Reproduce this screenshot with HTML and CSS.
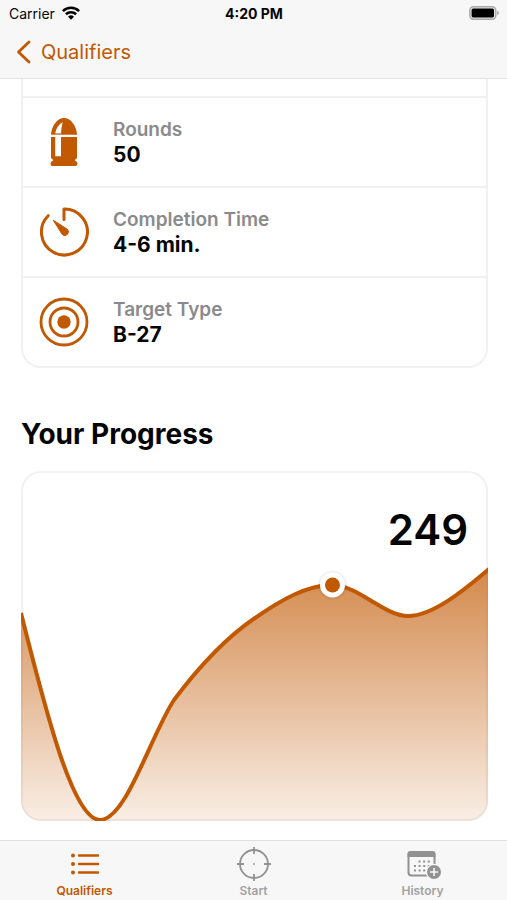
FILE: index.html
```
<!DOCTYPE html>
<html lang="en">
<head>
<meta charset="utf-8">
<meta name="viewport" content="width=device-width, initial-scale=1">
<title>Qualifiers</title>
<link rel="stylesheet" href="styles.css">
</head>
<body>
<div class="app">
  <header class="top">
    <div class="status">
      <div class="carrier">
        <span>Carrier</span>
        <svg class="wifi" viewBox="0 0 18 14" aria-hidden="true">
          <g fill="none" stroke="currentColor" stroke-width="2.6">
            <path d="M.9 5.1A11.6 11.6 0 0 1 17.1 5.1"/>
            <path d="M3.9 8.3A7.3 7.3 0 0 1 14.1 8.3"/>
          </g>
          <path fill="currentColor" d="M9 13.8 6 10.7A4.3 4.3 0 0 1 12 10.7Z"/>
        </svg>
      </div>
      <time class="clock">4:20 PM</time>
      <svg class="battery" viewBox="0 0 30 14" aria-hidden="true">
        <rect x=".8" y=".8" width="26" height="12.4" rx="3.6" fill="#e4e4e4" stroke="#aaa" stroke-width="1.4"/>
        <rect x="2.6" y="2.6" width="22.4" height="8.8" rx="1.6" fill="#000"/>
        <path d="M28.2 4.7Q30 5.4 30 7T28.2 9.3Z" fill="#aaa"/>
      </svg>
    </div>
    <nav>
      <a class="back" href="#qualifiers">
        <svg class="chevron" viewBox="0 0 15 24" aria-hidden="true"><path d="M13 2 2.5 12 13 22" fill="none" stroke="currentColor" stroke-width="2.8" stroke-linecap="round" stroke-linejoin="round"/></svg>
        <span>Qualifiers</span>
      </a>
    </nav>
  </header>

  <main class="content">
    <div class="details">
      <div class="row">
        <svg class="row-icon" viewBox="0 0 50 50" aria-hidden="true">
          <g fill="currentColor">
            <path d="M12 17.6C12.600 8.500 18.500 1 25 1S37.400 8.500 38 17.600Z"/>
            <path d="M12 19.800H38V40.500Q38 41.500 36.800 42Q35 42.800 36.500 44Q38.500 44.600 38.500 46.500T37 49H13Q11.500 48.500 11.500 46.500T13.500 44Q15 42.800 13.200 42Q12 41.500 12 40.500Z"/>
          </g>
          <path d="M16.200 17.600C16.700 12 19.300 7.500 23.700 5.300Q22 11 22 17.600V39.300H16.200Z" fill="#fff"/>
          <path d="M12 18.700H38" stroke="#fff" stroke-width="2.200"/>
          <path d="M12 17H38" stroke="currentColor" stroke-width="1.200"/>
        </svg>
        <dl class="fact"><dt>Rounds</dt><dd>50</dd></dl>
      </div>
      <div class="row">
        <svg class="row-icon" viewBox="0 0 50 50" aria-hidden="true">
          <path d="M25 12.500V2A23 23 0 1 1 9.200 8.700" fill="none" stroke="currentColor" stroke-width="3" stroke-linecap="round" stroke-linejoin="round"/>
          <path d="M14.200 13.200 28.300 22.200A3.700 3.700 0 0 1 23.500 27.800Z" fill="currentColor" stroke="currentColor" stroke-linejoin="round"/>
        </svg>
        <dl class="fact"><dt>Completion Time</dt><dd>4-6 min.</dd></dl>
      </div>
      <div class="row">
        <svg class="row-icon" viewBox="0 0 50 50" aria-hidden="true">
          <g fill="none" stroke="currentColor" stroke-width="2.800">
            <circle cx="25" cy="25" r="23"/>
            <circle cx="25" cy="25" r="14"/>
          </g>
          <circle cx="25" cy="25" r="6.700" fill="currentColor"/>
        </svg>
        <dl class="fact"><dt>Target Type</dt><dd>B-27</dd></dl>
      </div>
    </div>

    <h2 class="heading">Your Progress</h2>
    <section class="chart">
      <svg class="plot" viewBox="0 0 467 350" role="img" aria-label="Score history">
        <defs>
          <linearGradient id="area" gradientUnits="userSpaceOnUse" x1="0" y1="100" x2="0" y2="350">
            <stop offset="0" stop-color="#c15802" stop-opacity=".7"/>
            <stop offset="1" stop-color="#c15802" stop-opacity=".1"/>
          </linearGradient>
          <filter id="lift" x="-50%" y="-50%" width="200%" height="200%">
            <feDropShadow dx="0" dy="0" stdDeviation="1.500" flood-color="#000" flood-opacity=".25"/>
          </filter>
        </defs>
        <path fill="url(#area)" d="M0 142C27 250 53 349 79 349C105 349 129 266 153 229C177 197 206 166 234 147C260 129 286 114 311 114C337 114 363 145 387 145C411 145 441 121 468 98V350H0Z"/>
        <path fill="none" stroke="#c15802" stroke-width="4" d="M0 142C27 250 53 349 79 349C105 349 129 266 153 229C177 197 206 166 234 147C260 129 286 114 311 114C337 114 363 145 387 145C411 145 441 121 468 98"/>
        <circle cx="311.500" cy="114" r="12.500" fill="#fff" filter="url(#lift)"/>
        <circle cx="311.500" cy="114" r="7.500" fill="#c15802"/>
      </svg>
      <output class="score">249</output>
    </section>
  </main>

  <nav class="tabs">
    <a class="tab active" href="#qualifiers">
      <svg class="tab-icon" viewBox="0 0 36 34" aria-hidden="true">
        <g stroke="currentColor" stroke-width="2.400" stroke-linecap="round"><path d="M12 8.500H31M12 17H31M12 25.500H31"/></g>
        <g fill="currentColor"><circle cx="6" cy="8.500" r="2"/><circle cx="6" cy="17" r="2"/><circle cx="6" cy="25.500" r="2"/></g>
      </svg>
      <span>Qualifiers</span>
    </a>
    <a class="tab" href="#start">
      <svg class="tab-icon" viewBox="0 0 36 34" aria-hidden="true">
        <circle cx="18" cy="17" r="14" fill="none" stroke="currentColor" stroke-width="1.800"/>
        <path d="M18 0V7M18 27V34M1 17H8M28 17H35" stroke="currentColor" stroke-width="1.800"/>
        <circle cx="18" cy="17" r=".9" fill="currentColor"/>
      </svg>
      <span>Start</span>
    </a>
    <a class="tab" href="#history">
      <svg class="tab-icon" viewBox="0 0 36 34" aria-hidden="true">
        <rect x="3.500" y="5" width="26" height="23.500" rx="3" fill="none" stroke="currentColor" stroke-width="2"/>
        <path d="M2.500 10V7Q2.500 4 5.500 4H27.500Q30.500 4 30.500 7V10Z" fill="currentColor"/>
        <path d="M13.500 14.500H26M9 19H26M9 23.500H22" stroke="currentColor" stroke-width="2" stroke-dasharray="2 2.600"/>
        <circle cx="29" cy="25" r="8.300" fill="#f7f7f7"/>
        <circle cx="29" cy="25" r="7" fill="currentColor"/>
        <path d="M29 21V29M25 25H33" stroke="#f7f7f7" stroke-width="1.600"/>
      </svg>
      <span>History</span>
    </a>
  </nav>
</div>
</body>
</html>
```
FILE: styles.css
```
:root {
  --accent: #c15802;
  --line: #f1f1f2;
  --bar: #f7f7f7;
  --muted: #929292;
}

* { box-sizing: border-box; }

body {
  margin: 0;
  background: #fff;
  color: #050505;
  font-family: Inter, "Liberation Sans", sans-serif;
}

a { color: inherit; text-decoration: none; }
svg { display: block; flex: none; }

.app {
  display: flex;
  flex-direction: column;
  height: 100vh;
}

.top {
  flex: none;
  padding-bottom: 12px;
  background: var(--bar);
  border-bottom: 1px solid #e2e2e2;
}

.status {
  display: grid;
  grid-template-columns: 1fr auto 1fr;
  align-items: center;
  height: 26px;
  padding: 0 8px 0 9px;
  font-size: 14px;
}

.carrier { display: flex; align-items: center; gap: 7px; }
.wifi { width: 18px; height: 14px; }
.clock { font-weight: 700; }
.battery { width: 30px; height: 14px; justify-self: end; }

.back {
  display: inline-flex;
  align-items: center;
  gap: 10px;
  height: 40px;
  padding: 12px 16px 0;
  color: var(--accent);
  font-size: 20px;
  line-height: 28px;
  vertical-align: top;
}

.chevron { width: 15px; height: 24px; }

.content {
  flex: 1;
  min-height: 0;
  overflow: hidden;
  padding: 0 19px 0 21px;
}

.details {
  padding-top: 17px;
  border: 2px solid var(--line);
  border-top: 0;
  border-radius: 0 0 20px 20px;
}

.row {
  display: flex;
  align-items: center;
  gap: 24px;
  height: 90px;
  padding: 0 16px;
  border-top: 2px solid var(--line);
}

.row-icon { width: 50px; height: 50px; color: var(--accent); }

.fact { margin: 0; line-height: 25px; }
.fact dt { color: #8a8a8c; font-size: 19px; font-weight: 600; }
.fact dd { margin: 0; font-size: 21px; font-weight: 700; }

.heading {
  margin: 48px 0 19px;
  font-size: 28px;
  font-weight: 700;
  line-height: 36px;
}

.chart {
  position: relative;
  overflow: hidden;
  border-radius: 20px;
  box-shadow: inset 0 0 0 2px var(--line);
}

.plot { width: 100%; height: auto; }

.score {
  position: absolute;
  top: 34px;
  right: 20px;
  font-size: 42px;
  font-weight: 600;
  line-height: 50px;
}

.tabs {
  flex: none;
  display: grid;
  grid-template-columns: repeat(3, 1fr);
  height: 60px;
  padding-top: 6px;
  background: var(--bar);
  border-top: 1px solid #dfdfdf;
}

.tab {
  display: flex;
  flex-direction: column;
  align-items: center;
  gap: 2px;
  color: var(--muted);
  font-size: 12px;
  font-weight: 600;
  line-height: 16px;
}

.tab span { color: #a2a2a2; }
.tab.active, .tab.active span { color: var(--accent); }
.tab-icon { width: 36px; height: 34px; }
```
